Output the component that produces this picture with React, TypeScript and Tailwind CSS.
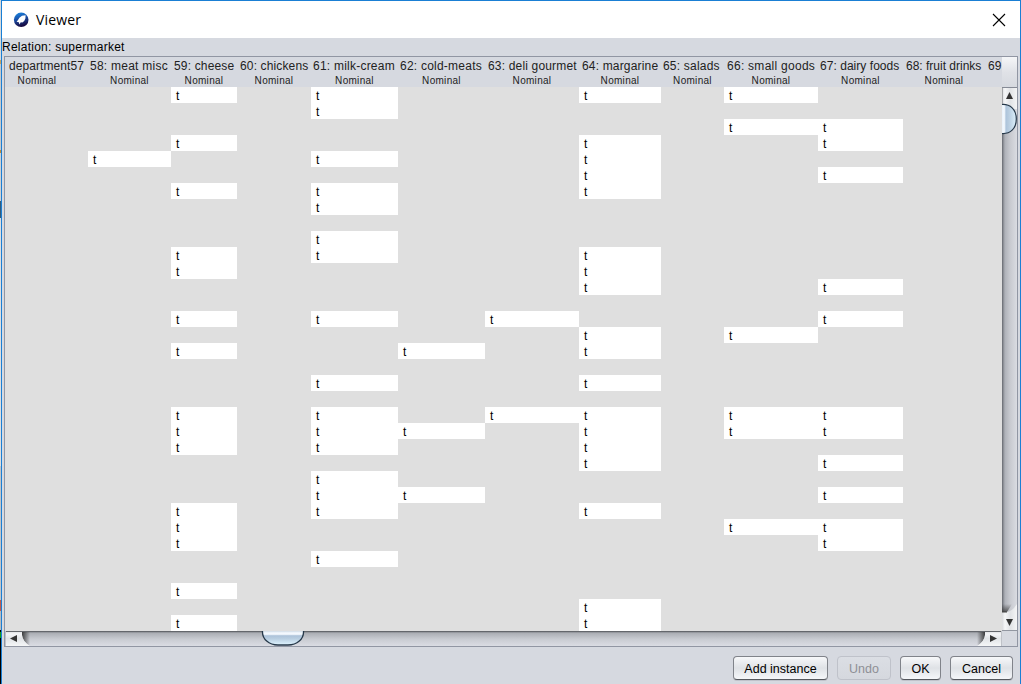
import React from 'react';

type Column = { label: string; width: string; text: string; align?: string; rows: number[] };

const columns: Column[] = [
  { label: 'department57', width: 'w-[83px]', text: 'pl-[4px] tracking-[0.08px]', align: 'pr-[19px]', rows: [] },
  { label: '58: meat misc', width: 'w-[83px]', text: 'pl-[2px] tracking-[0.25px]', rows: [4] },
  { label: '59: cheese', width: 'w-[66px]', text: 'pl-[3px] tracking-[0.16px]', rows: [0, 3, 6, 10, 11, 14, 16, 20, 21, 22, 26, 27, 28, 31, 33] },
  { label: '60: chickens', width: 'w-[74px]', text: 'pl-[3px] tracking-[0.14px]', rows: [] },
  { label: '61: milk-cream', width: 'w-[87px]', text: 'pl-[2px] tracking-[0.23px]', rows: [0, 1, 4, 6, 7, 9, 10, 14, 18, 20, 21, 22, 24, 25, 26, 29] },
  { label: '62: cold-meats', width: 'w-[87px]', text: 'pl-[2px] tracking-[0.23px]', rows: [16, 21, 25] },
  { label: '63: deli gourmet', width: 'w-[94px]', text: 'pl-[3px] tracking-[0.17px]', rows: [14, 20] },
  { label: '64: margarine', width: 'w-[82px]', text: 'pl-[3px] tracking-[0.17px]', rows: [0, 3, 4, 5, 6, 10, 11, 12, 15, 16, 18, 20, 21, 22, 23, 26, 32, 33] },
  { label: '65: salads', width: 'w-[63px]', text: 'pl-[2px] tracking-[0.2px]', rows: [] },
  { label: '66: small goods', width: 'w-[94px]', text: 'pl-[3px] tracking-[0.27px]', rows: [0, 2, 15, 20, 21, 27] },
  { label: '67: dairy foods', width: 'w-[85px]', text: 'pl-[2px] tracking-[0.04px]', rows: [2, 3, 5, 12, 14, 20, 21, 23, 25, 27, 28] },
  { label: '68: fruit drinks', width: 'w-[82px]', text: 'pl-[3px]', rows: [] },
];

const rowIndexes = Array.from({ length: 34 }, (_, i) => i);

function TitleBar() {
  return (
    <div className="flex h-[37px] items-center justify-between bg-white pl-[11px] pr-[14px]">
      <div className="flex items-center gap-[7px]">
        <svg width="16" height="16" viewBox="0 0 16 16">
          <defs>
            <linearGradient id="bird" x1="0" y1="0" x2="0.3" y2="1">
              <stop offset="0" stopColor="#1a8fe8" />
              <stop offset="0.45" stopColor="#1b55ae" />
              <stop offset="1" stopColor="#170a42" />
            </linearGradient>
          </defs>
          <circle cx="8.2" cy="7.8" r="7.3" fill="url(#bird)" />
          <path d="M12.6 3.2 L12.4 6.6 L11.2 9 L9.4 10.4 L7.8 10.2 L6.4 12.4 L5.8 10.2 L3.6 9.8 L5 8 L6.4 5.8 L9 3.8 Z" fill="#fff" />
        </svg>
        <span className="font-['Open_Sans','Noto_Sans',sans-serif] text-[14px] leading-[20px] tracking-[0.15px] text-black">Viewer</span>
      </div>
      <svg width="14" height="14" viewBox="0 0 14 14">
        <path d="M1 1 L13 13 M13 1 L1 13" stroke="#000" strokeWidth="1.1" />
      </svg>
    </div>
  );
}

function Header() {
  return (
    <div className="flex h-[30px] w-[997px] overflow-hidden bg-[#d6d9e0] text-[#222]">
      {columns.map((c) => (
        <div key={c.label} className={`flex shrink-0 flex-col whitespace-nowrap ${c.width}`}>
          <span className={`h-[17px] text-[12px] leading-[18px] ${c.text}`}>{c.label}</span>
          <span className={`text-center text-[10px] leading-[13px] tracking-[0.3px] ${c.align ?? ''}`}>Nominal</span>
        </div>
      ))}
      <span className="shrink-0 pl-[3px] text-[12px] leading-[18px]">69</span>
    </div>
  );
}

function Grid() {
  return (
    <div className="flex h-[544px] w-[997px] overflow-hidden bg-[#dfdfdf]">
      {columns.map((c) => (
        <div key={c.label} className={`shrink-0 ${c.width}`}>
          {rowIndexes.map((r) => (
            <div key={r} className={c.rows.includes(r) ? 'h-4 bg-white pl-[5px] text-[12px] leading-[18px] text-black' : 'h-4'}>
              {c.rows.includes(r) ? 't' : null}
            </div>
          ))}
        </div>
      ))}
    </div>
  );
}

function VerticalScroll() {
  return (
    <svg width="15" height="544" viewBox="0 0 15 544" className="block">
      <defs>
        <linearGradient id="vt" x1="0" x2="1" y1="0" y2="0">
          <stop offset="0" stopColor="#64676e" />
          <stop offset="0.1" stopColor="#8e9198" />
          <stop offset="0.2" stopColor="#afb2b9" />
          <stop offset="0.55" stopColor="#c8cad0" />
          <stop offset="1" stopColor="#dadce2" />
        </linearGradient>
        <linearGradient id="vb" x1="0" x2="1" y1="0" y2="0">
          <stop offset="0" stopColor="#d9dadd" />
          <stop offset="0.2" stopColor="#f6f7f8" />
          <stop offset="0.55" stopColor="#e1e3e6" />
          <stop offset="1" stopColor="#f4f5f6" />
        </linearGradient>
        <linearGradient id="vth" x1="0" x2="1" y1="0" y2="0">
          <stop offset="0" stopColor="#e8f1fa" />
          <stop offset="0.16" stopColor="#f5faff" />
          <stop offset="0.28" stopColor="#adc4db" />
          <stop offset="0.5" stopColor="#b9cee1" />
          <stop offset="1" stopColor="#dcf0fc" />
        </linearGradient>
        <linearGradient id="vsh" x1="0" x2="0" y1="0" y2="1">
          <stop offset="0" stopColor="#333" stopOpacity="0" />
          <stop offset="1" stopColor="#333" stopOpacity="0.75" />
        </linearGradient>
      </defs>
      <rect width="15" height="544" fill="url(#vt)" />
      <path d="M0 0 H15 V22 H0 Z" fill="url(#vb)" />
      <path d="M0 517 H10 L5 525 H0 Z" fill="url(#vsh)" />
      <path d="M0 525 H4 Q10 525 15 517 V544 H0 Z" fill="url(#vb)" />
      <path d="M0 525 H5" fill="none" stroke="#444" />
      <path d="M0.5 0 V22" stroke="#a4a5a8" />
      <path d="M0 0.5 H15" stroke="#858a95" />
      <path d="M0 543.5 H15" stroke="#9297a1" />
      <path d="M4 12 L7.5 5 L11 12 Z" fill="#343434" />
      <path d="M4 532 L7.5 539 L11 532 Z" fill="#343434" />
      <path d="M0 17.5 C8 17 14.3 22 14.3 32 C14.3 42 8 47 0 46.5 Z" fill="url(#vth)" />
      <path d="M0 17.5 C8 17 14.3 22 14.3 32 C14.3 42 8 47 0 46.5" fill="none" stroke="#27394a" strokeWidth="1.2" />
    </svg>
  );
}

function HorizontalScroll() {
  return (
    <svg width="997" height="15" viewBox="0 0 997 15" className="block">
      <defs>
        <linearGradient id="ht" x1="0" x2="0" y1="0" y2="1">
          <stop offset="0" stopColor="#62656b" />
          <stop offset="0.08" stopColor="#8f9298" />
          <stop offset="0.17" stopColor="#aeb1b7" />
          <stop offset="0.55" stopColor="#c9ccd2" />
          <stop offset="1" stopColor="#dadce3" />
        </linearGradient>
        <linearGradient id="hb" x1="0" x2="0" y1="0" y2="1">
          <stop offset="0" stopColor="#d8dadd" />
          <stop offset="0.2" stopColor="#f4f5f7" />
          <stop offset="0.5" stopColor="#e1e4e7" />
          <stop offset="1" stopColor="#f5f6f7" />
        </linearGradient>
        <linearGradient id="hth" x1="0" x2="0" y1="0" y2="1">
          <stop offset="0" stopColor="#cfdbe6" />
          <stop offset="0.14" stopColor="#f5faff" />
          <stop offset="0.24" stopColor="#f0f6fc" />
          <stop offset="0.34" stopColor="#adc3da" />
          <stop offset="0.55" stopColor="#b8cee1" />
          <stop offset="1" stopColor="#dff4ff" />
        </linearGradient>
        <linearGradient id="hsl" x1="0" x2="1" y1="0" y2="0">
          <stop offset="0" stopColor="#222" stopOpacity="0.8" />
          <stop offset="1" stopColor="#222" stopOpacity="0" />
        </linearGradient>
        <linearGradient id="hsr" x1="1" x2="0" y1="0" y2="0">
          <stop offset="0" stopColor="#222" stopOpacity="0.8" />
          <stop offset="1" stopColor="#222" stopOpacity="0" />
        </linearGradient>
      </defs>
      <rect width="997" height="15" fill="url(#ht)" />
      <path d="M17 0 H25 V15 Q17 10 17 4 Z" fill="url(#hsl)" />
      <path d="M0 0 H17 V4 Q18 11 25 15 H0 Z" fill="url(#hb)" />
      <path d="M980 0 H972 V15 Q980 10 980 4 Z" fill="url(#hsr)" />
      <path d="M997 0 H980 V4 Q979 11 972 15 H997 Z" fill="url(#hb)" />
      <path d="M0 0.5 H997" stroke="#64676c" />
      <path d="M0.5 0 V15 M996.5 0 V15" stroke="#bfc2c8" />
      <path d="M12 4 L5 7.5 L12 11 Z" fill="#343434" />
      <path d="M985 4 L992 7.5 L985 11 Z" fill="#343434" />
      <path d="M257.5 0 C257 8 264 14 273 14 H283 C292 14 299 8 298.5 0 Z" fill="url(#hth)" />
      <path d="M257.5 0 C257 8 264 14 273 14 H283 C292 14 299 8 298.5 0" fill="none" stroke="#27394a" strokeWidth="1.3" />
    </svg>
  );
}

function Button({ label, width, disabled = false }: { label: string; width: string; disabled?: boolean }) {
  const look = disabled
    ? 'border-[#bfc2ca] text-[#8e8f95] bg-linear-to-b from-[#dbdee4] to-[#d5d8de]'
    : 'border-[#80838a] border-b-[#55585e] text-black bg-linear-to-b from-[#f7f8fa] via-[#dfe2e6] to-[#f5f7fa] shadow-[0_1px_0_#bfc2ca]';
  return (
    <button className={`h-6 rounded-[4px] border pt-px text-[12.5px] leading-[22px] whitespace-nowrap ${width} ${look}`} disabled={disabled}>
      {label}
    </button>
  );
}

export default function App() {
  return (
    <div className="flex h-[684px] w-[1021px] overflow-hidden bg-[#d6d9e0] font-['Liberation_Sans',Arial,sans-serif] text-black">
      <div className="flex w-px shrink-0 flex-col bg-[#d0d2d6]">
        <div className="h-[60px] bg-[#d7dadd]" />
        <div className="h-1 bg-[#c9a35f]" />
        <div className="h-[86px] bg-[#c7c9cc]" />
        <div className="h-[3px] bg-[#c08c35]" />
        <div className="h-12 bg-[#cfd1d4]" />
        <div className="h-[17px] bg-[#315b7c]" />
        <div className="h-[248px] bg-[#dcdee1]" />
        <div className="h-[134px] bg-[#c3c5c9]" />
        <div className="h-[11px] bg-[#c35b4d]" />
        <div className="h-[19px] bg-[#b9bbbe]" />
        <div className="h-[2px] bg-black" />
        <div className="h-[6px] bg-[#129b19]" />
        <div className="grow bg-black" />
      </div>
      <div className="flex grow flex-col border-x border-t border-[#1a7fd4]">
        <TitleBar />
        <div className="h-[18px] text-[12px] leading-[18px] tracking-[0.25px]">Relation: supermarket</div>
        <div className="ml-[2px] grid h-[591px] w-[1014px] grid-cols-[997px_15px] grid-rows-[30px_544px_15px] border border-[#9196a3]">
          <Header />
          <div className="bg-linear-to-b from-[#f5f6f8] via-[#e0e2e7] to-[#d6d9df]" />
          <Grid />
          <VerticalScroll />
          <HorizontalScroll />
          <div className="bg-[#d6d9e0]" />
        </div>
        <div className="flex justify-end gap-[9px] pr-[7px] pt-[9px]">
          <Button label="Add instance" width="w-[95px]" />
          <Button label="Undo" width="w-[54px]" disabled />
          <Button label="OK" width="w-[41px]" />
          <Button label="Cancel" width="w-[63px]" />
        </div>
      </div>
    </div>
  );
}
